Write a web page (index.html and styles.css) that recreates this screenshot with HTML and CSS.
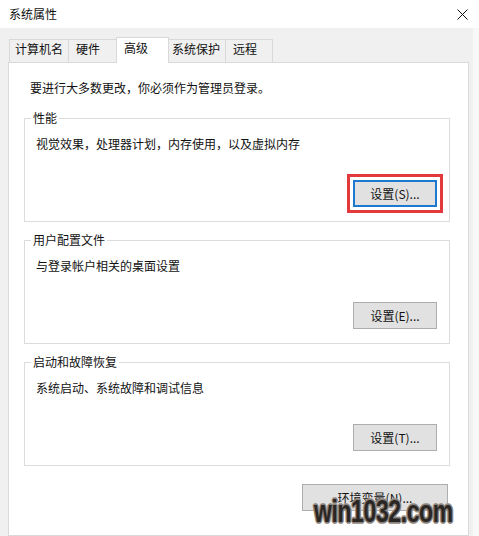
FILE: index.html
```html
<!DOCTYPE html>
<html lang="zh-CN">
<head>
    <meta charset="utf-8">
    <link rel="stylesheet" href="styles.css">
    <title>系统属性</title>
</head>
<body>
    <div class="titlebar">
        <span class="title">系统属性</span>
        <svg class="close" viewBox="0 0 11 11"><path d="M0.5 0.5 L10.5 10.5 M10.5 0.5 L0.5 10.5" stroke="#111" stroke-width="1" fill="none"/></svg>
    </div>
    <div class="frame">
        <div class="tabs">
            <div class="tab tab-name">计算机名</div>
            <div class="tab tab-hw">硬件</div>
            <div class="tab tab-adv active">高级</div>
            <div class="tab tab-prot">系统保护</div>
            <div class="tab tab-remote">远程</div>
        </div>
        <div class="panel">
            <p class="note">要进行大多数更改，你必须作为管理员登录。</p>

            <fieldset class="group">
                <legend>性能</legend>
                <p class="desc">视觉效果，处理器计划，内存使用，以及虚拟内存</p>
                <div class="actions"><button class="btn focus">设置(S)...</button></div>
            </fieldset>

            <fieldset class="group">
                <legend>用户配置文件</legend>
                <p class="desc">与登录帐户相关的桌面设置</p>
                <div class="actions"><button class="btn">设置(E)...</button></div>
            </fieldset>

            <fieldset class="group">
                <legend>启动和故障恢复</legend>
                <p class="desc">系统启动、系统故障和调试信息</p>
                <div class="actions"><button class="btn">设置(T)...</button></div>
            </fieldset>

            <div class="actions env"><button class="btn wide">环境变量(N)...</button></div>
        </div>
        <div class="watermark">win1032.com</div>
    </div>
</body>
</html>
```

FILE: styles.css
```css
* {
    box-sizing: border-box;
}
body {
    margin: 0;
    width: 479px;
    height: 536px;
    overflow: hidden;
    background-color: #f0f0f0;
    font-family: "Noto Sans CJK SC", sans-serif;
    font-size: 12px;
    line-height: 16px;
    color: #111;
}
.titlebar {
    height: 28px;
    background-color: #fff;
    display: flex;
    align-items: center;
    justify-content: space-between;
    padding: 0 11px 0 9px;
}
.close {
    width: 11px;
    height: 11px;
}
.frame {
    position: relative;
    height: 508px;
    padding: 9px 4px 0 8px;
    border-right: 6px solid #f8f8f8;
}
.tabs {
    display: flex;
    align-items: flex-end;
    height: 25px;
    padding-left: 1px;
}
.tab {
    height: 23px;
    border: 1px solid #d9d9d9;
    border-bottom: 0;
    padding: 1px 0 0 7px;
    white-space: nowrap;
}
.tab + .tab {
    margin-left: -1px;
}
.tab-name {
    width: 60px;
    padding-left: 5px;
}
.tab-hw {
    width: 49px;
}
.tab-adv {
    width: 53px;
}
.tab-prot {
    width: 58px;
    padding-left: 3px;
}
.tab-remote {
    width: 48px;
}
.tab.active {
    height: 26px;
    margin-bottom: -1px;
    padding-top: 2px;
    background-color: #fff;
    position: relative;
    z-index: 1;
}
.panel {
    height: 474px;
    background-color: #fff;
    border: 1px solid #d9d9d9;
    padding: 17px 18px 0 15px;
}
.note {
    margin: 0 0 14px 6px;
}
.group {
    margin: 0 0 10px;
    padding: 0 12px 14px 11px;
    border: 1px solid #dcdcdc;
    min-width: 0;
}
.group legend {
    margin-left: -5px;
    padding: 0 2px;
    line-height: 16px;
}
.desc {
    margin: 10px 0 0;
}
.actions {
    display: flex;
    justify-content: flex-end;
    margin-top: 28px;
}
.actions.env {
    margin-top: 18px;
    margin-right: 2px;
}
.btn {
    width: 84px;
    height: 27px;
    padding: 0;
    border: 1px solid #adadad;
    background-color: #e1e1e1;
    font-family: inherit;
    font-size: 12px;
    color: #111;
}
.btn.focus {
    border: 2px solid #1f78cf;
    outline: 3px solid #e23a3c;
    outline-offset: 3px;
}
.btn.wide {
    width: 146px;
}
.watermark {
    position: absolute;
    left: 314px;
    top: 468px;
    font-family: "Liberation Sans", Arial, sans-serif;
    font-weight: bold;
    font-size: 31px;
    line-height: 31px;
    letter-spacing: -0.5px;
    color: #2a2623;
    transform: scaleX(0.74);
    transform-origin: left top;
    text-shadow: 1px 1px 0 #8a827b, -1px -1px 0 #8a827b, 1px -1px 0 #8a827b, -1px 1px 0 #8a827b,
        2px 0 0 #a29a92, -2px 0 0 #a29a92, 0 2px 0 #a29a92, 0 -2px 0 #a29a92;
}
```
